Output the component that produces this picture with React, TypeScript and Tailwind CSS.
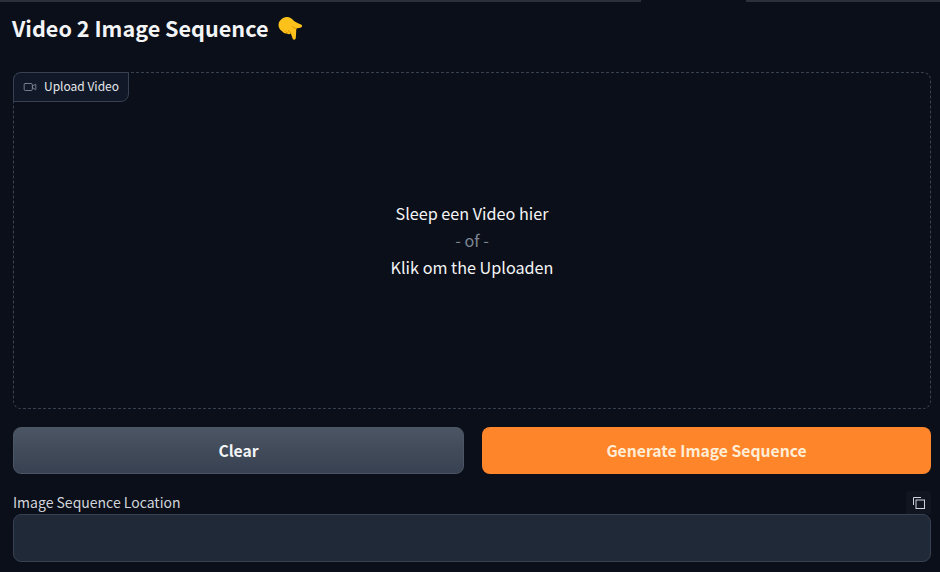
import { Video } from 'lucide-react'

function PointingHand() {
    return (
        <svg width="25" height="25" viewBox="0 0 25 25" className="shrink-0">
            {/* back of the hand, thumb and index finger */}
            <path d="M8.500 1C11 .6 13.500 2 15.500 4.500c2 1.800 5 3 7.500 4 1.300.6 1.500 2 .4 2.700-1.500.8-3.500 1-5 1.300-.3 2.500-.3 6-.6 9.500-.2 1.800-2.300 2.300-3.100.7-.7-1.700-1.200-3.700-1.900-5.200-1.300 1-3 .8-3.800.1-2 0-3.900-.8-4.900-2.300C1 13.300.3 10.500.6 8 1 4.500 4.500 1.500 8.500 1z" fill="#fcc21b" />
            <path d="M7.200 15c.5 1.100 1.300 1.800 2.400 2M10.500 14.500c.4 1 1.200 1.700 2.500 2.100" stroke="#e59600" strokeWidth="1" fill="none" strokeLinecap="round" />
            <path d="M17.800 12.500c-1.300-.2-2.500-.9-3.300-2" stroke="#e59600" strokeWidth="1" fill="none" strokeLinecap="round" />
        </svg>
    )
}

function CopyIcon() {
    return (
        <svg width="12" height="12" viewBox="0 0 12 12" fill="none" stroke="#d1d5db" strokeWidth="1">
            <path d="M.5 8V.5H8" />
            <rect x="3" y="3" width="8.500" height="8.500" />
        </svg>
    )
}

export default function App() {
    return (
        <div className="h-[572px] w-[940px] overflow-hidden bg-[#0b0f19] font-['Noto_Sans_CJK_SC','Noto_Sans',sans-serif] text-[#f3f4f6]">
            {/* Top edge of the tab frame */}
            <div className="flex h-[2px] w-full">
                <div className="w-[641px] bg-[#2b303b]" />
                <div className="w-[105px]" />
                <div className="flex-1 bg-[#2b303b]" />
            </div>

            <div className="pt-[8px] pr-[9px] pl-[13px]">
                {/* Title */}
                <h1 className="flex h-[36px] items-center gap-[10px] text-[21.600px] leading-[36px] font-semibold">
                    <span className="-ml-[1px]">Video 2 Image Sequence</span>
                    <PointingHand />
                </h1>

                {/* Upload area */}
                <div className="relative mt-[26px] flex h-[337px] w-[918px] flex-col items-center justify-center rounded-[8px] border border-dashed border-[#374151] text-[16.200px] leading-[27px]">
                    <div className="absolute -top-px -left-px flex h-[30px] w-[116px] items-center gap-[7px] rounded-tl-[8px] rounded-br-[8px] border border-[#374151] bg-[#111827] pb-[3px] pl-[9px] text-[12px] whitespace-nowrap text-[#e5e7eb]">
                        <Video className="mt-[2px] h-[14px] w-[14px] text-[#9ca3af]" strokeWidth={1.250} />
                        <span>Upload Video</span>
                    </div>
                    <span className="mt-[-1px]">Sleep een Video hier</span>
                    <span className="text-[#7c8493]">- of -</span>
                    <span>Klik om the Uploaden</span>
                </div>

                {/* Actions */}
                <div className="mt-[18px] flex gap-[18px]">
                    <button className="h-[47px] w-[451px] rounded-[8px] border border-[#4b5563] bg-gradient-to-b from-[#4b5563] to-[#374151] text-[15.700px] font-semibold">
                        Clear
                    </button>
                    <button className="h-[47px] flex-1 rounded-[8px] bg-[#ff852b] text-[15.700px] font-semibold text-[#ffedd5]">
                        Generate Image Sequence
                    </button>
                </div>

                {/* Output */}
                <div className="relative mt-[17px]">
                    <div className="absolute top-0 right-0 flex h-[23px] w-[25px] items-center justify-center rounded-t-[4px] bg-[#111520]">
                        <CopyIcon />
                    </div>
                    <label className="block h-[23px] text-[14px] leading-[23px] text-[#d1d5db]">Image Sequence Location</label>
                    <div className="h-[48px] w-full rounded-[8px] border border-[#374151] bg-[#1f2937]" />
                </div>
            </div>
        </div>
    )
}
